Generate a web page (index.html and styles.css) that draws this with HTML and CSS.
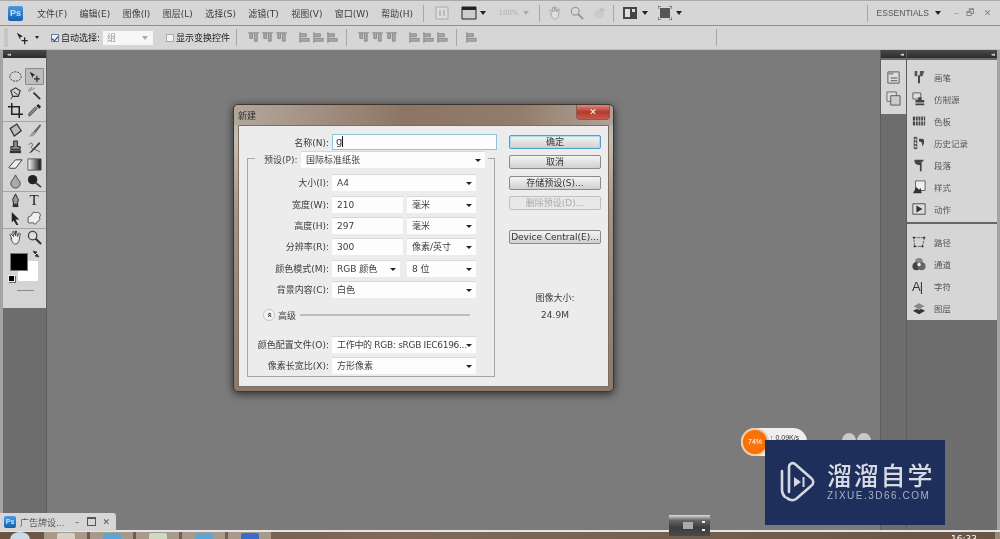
FILE: index.html
```html
<!DOCTYPE html>
<html lang="zh">
<head>
<meta charset="utf-8">
<title>新建</title>
<link rel="stylesheet" href="styles.css">
</head>
<body>
<svg class="defs" width="0" height="0">
  <symbol id="marquee" viewBox="0 0 16 16"><ellipse cx="8" cy="8" rx="6" ry="5" fill="none" stroke="#333" stroke-dasharray="2 1"/></symbol>
  <symbol id="move" viewBox="0 0 16 16"><path d="M2 2l7 4-3 1 0 3z" fill="#222"/><path d="M11 7v8M7.500 11h7" stroke="#222" stroke-width="1.400"/></symbol>
  <symbol id="lasso" viewBox="0 0 16 16"><path d="M3 5l5-3 5 3-2 6H5z" fill="none" stroke="#333" stroke-width="1.200"/><path d="M5 11l-2 3M6 6l5 4" stroke="#333"/></symbol>
  <symbol id="wand" viewBox="0 0 16 16"><path d="M7 7l7 7" stroke="#333" stroke-width="2"/><path d="M5 1v3M1 5h3M2 2l2 2M8 2L6 4" stroke="#777"/></symbol>
  <symbol id="crop" viewBox="0 0 16 16"><path d="M4 0v12h12M0 4h12v12" fill="none" stroke="#222" stroke-width="1.600"/></symbol>
  <symbol id="dropper" viewBox="0 0 16 16"><path d="M2 14l2-1 7-7-2-2-7 7z" fill="#888" stroke="#333" stroke-width=".7"/><path d="M10 3l2-2 3 3-2 2z" fill="#222"/></symbol>
  <symbol id="heal" viewBox="0 0 16 16"><path d="M8 1l6 6-6 7-6-7z" fill="#bbb" stroke="#333" stroke-width="1.300" transform="rotate(12 8 8)"/></symbol>
  <symbol id="brush" viewBox="0 0 16 16"><path d="M14 1L7 9l2 2 6-8z" fill="#666"/><path d="M7 9c-3 1-2 4-5 5 3 1 6 0 7-3z" fill="#999"/></symbol>
  <symbol id="stamp" viewBox="0 0 16 16"><path d="M6 1h4v6h3v3H3V7h3z" fill="#888" stroke="#222"/><path d="M2 11h12v3H2z" fill="#333"/></symbol>
  <symbol id="hist" viewBox="0 0 16 16"><path d="M13 2L4 12l-2 2 3-1L14 4z" fill="#333"/><path d="M2 5c3-4 5 0 3 2-2 3 6 3 9 6" fill="none" stroke="#555"/></symbol>
  <symbol id="eraser" viewBox="0 0 16 16"><path d="M1 11l7-8h7l-7 9H2z" fill="#eee" stroke="#333"/></symbol>
  <symbol id="grad" viewBox="0 0 16 16"><defs><linearGradient id="g1"><stop offset="0" stop-color="#fff"/><stop offset="1" stop-color="#111"/></linearGradient></defs><path d="M1 2h14v12H1z" fill="url(#g1)" stroke="#555"/></symbol>
  <symbol id="drop" viewBox="0 0 16 16"><path d="M8 1c2 5 5 6 5 9a5 5 0 0 1-10 0c0-3 3-4 5-9z" fill="#aaa" stroke="#444"/></symbol>
  <symbol id="dodge" viewBox="0 0 16 16"><circle cx="6" cy="6" r="5" fill="#222"/><path d="M9 9l6 5" stroke="#444" stroke-width="2"/></symbol>
  <symbol id="pen" viewBox="0 0 16 16"><path d="M8 1l3 6-1 5H6L5 7z" fill="#999" stroke="#222"/><path d="M5 12h6v3H5z" fill="#333"/></symbol>
  <symbol id="arrow" viewBox="0 0 16 16"><path d="M4 1l8 8-4 0 3 6-2 0-3-5-2 2z" fill="#222"/></symbol>
  <symbol id="shape" viewBox="0 0 16 16"><path d="M7 1c3 2 4-1 7 2 1 3-2 3 0 6-3 2-4 5-6 5-1-3-5 0-7-2 1-3-1-4 1-6 3 0 3-3 5-5z" fill="#eee" stroke="#444"/></symbol>
  <symbol id="hand" viewBox="0 0 16 16"><path d="M4 9L2 5l1-1 3 3-1-5 1-1 2 5V1l1 0 1 6 2-4 1 1-1 6c0 3-2 5-4 5s-3-1-5-6z" fill="#eee" stroke="#333" stroke-width=".9"/></symbol>
  <symbol id="zoomg" viewBox="0 0 16 16"><circle cx="6" cy="6" r="4.500" fill="#ddd" stroke="#444" stroke-width="1.400"/><path d="M9 9l6 6" stroke="#333" stroke-width="2.200"/></symbol>
  <symbol id="swap" viewBox="0 0 8 8"><path d="M1 1l4 1-2 2zM7 7L3 6l2-2zM2 2l4 4" fill="#333" stroke="#333" stroke-width=".7"/></symbol>
  <symbol id="alv" viewBox="0 0 14 14"><path d="M1 2h12M3 2v6h3V2M8 2v9h3V2" fill="#aaa" stroke="#888"/></symbol>
  <symbol id="alh" viewBox="0 0 14 14"><path d="M2 1v12M2 3h7v3H2M2 8h10v3H2" fill="#aaa" stroke="#888"/></symbol>
  <symbol id="bridge" viewBox="0 0 14 14"><path d="M1 1h12v12H1z" fill="#ddd" stroke="#aaa"/><path d="M4 4v6h2V4zM8 4v6h2V4z" fill="#bbb"/></symbol>
  <symbol id="docs" viewBox="0 0 16 14"><path d="M1 1h14v12H1z" fill="#ccc" stroke="#222"/><path d="M1 1h14v3H1z" fill="#222"/></symbol>
  <symbol id="layout" viewBox="0 0 14 14"><path d="M0 1h14v12H0z" fill="#444"/><path d="M2 3h5v8H2zM9 3h3v3H9z" fill="#ddd"/></symbol>
  <symbol id="screen" viewBox="0 0 14 14"><path d="M2 2h10v10H2z" fill="#555"/><path d="M0 3V0h3M11 0h3v3M14 11v3h-3M3 14H0v-3" fill="none" stroke="#444"/></symbol>
  <symbol id="rotate" viewBox="0 0 14 14"><circle cx="7" cy="8" r="5" fill="#bbb"/><path d="M8 1l5 3-4 3z" fill="#999"/></symbol>
  <symbol id="p-brush" viewBox="0 0 16 16"><path d="M3 1v6h3V1zM9 1v6h3l2-6z" fill="#555"/><path d="M7 6h2v9H7z" fill="#333"/></symbol>
  <symbol id="p-clone" viewBox="0 0 16 16"><path d="M1 1h9v7H1z" fill="#ddd" stroke="#555"/><path d="M7 6h4v3h3v3H4V9h3zM4 13h10v2H4z" fill="#444"/></symbol>
  <symbol id="p-swatch" viewBox="0 0 16 16"><path d="M1 3h14v10H1z" fill="#444"/><path d="M4 3v10M7 3v10M10 3v10M13 3v10M1 8h14" stroke="#ddd"/></symbol>
  <symbol id="p-hist" viewBox="0 0 16 16"><path d="M2 1h4v14H2z" fill="#555"/><path d="M3 3h2v2H3zM3 7h2v2H3zM3 11h2v2H3z" fill="#ddd"/><path d="M8 3h4c3 1 2 6 0 9l-1-5-3-1z" fill="#444"/></symbol>
  <symbol id="p-para" viewBox="0 0 16 16"><path d="M3 2h10v2h-2v11H9V8C5 8 2 6 3 2z" fill="#444"/></symbol>
  <symbol id="p-style" viewBox="0 0 16 16"><path d="M4 1h11v11H4z" fill="#eee" stroke="#555"/><path d="M1 15l4-7 3 3 2-2 1 6z" fill="#333"/></symbol>
  <symbol id="p-action" viewBox="0 0 16 16"><path d="M1 2h14v12H1z" fill="#ddd" stroke="#444"/><path d="M5 4l7 4-7 4z" fill="#333"/></symbol>
  <symbol id="p-path" viewBox="0 0 16 16"><path d="M2 3h12l-2 10H3z" fill="none" stroke="#555" stroke-dasharray="3 1"/><path d="M1 2h2v2H1zM13 2h2v2h-2zM2 12h2v2H2zM11 12h2v2h-2z" fill="#222"/></symbol>
  <symbol id="p-chan" viewBox="0 0 16 16"><circle cx="8" cy="5.500" r="4.500" fill="#888"/><circle cx="5" cy="10.500" r="4.500" fill="#444"/><circle cx="11" cy="10.500" r="4.500" fill="#666"/><circle cx="8" cy="8.500" r="2" fill="#eee"/></symbol>
  <symbol id="p-layer" viewBox="0 0 16 16"><path d="M8 8l7 3-7 4-7-4z" fill="#333"/><path d="M8 2l7 4-7 4-7-4z" fill="#888" stroke="#eee" stroke-width=".6"/></symbol>
  <symbol id="d-min" viewBox="0 0 16 16"><path d="M2 2h12v12H2z" fill="#ddd" stroke="#555"/><path d="M2 2h6v3H2z" fill="#999"/><path d="M5 8h7v1H5zM5 11h7v1H5z" fill="#555"/></symbol>
  <symbol id="d-copy" viewBox="0 0 16 16"><path d="M1 1h10v10H1z" fill="#ddd" stroke="#666"/><path d="M5 5h10v10H5z" fill="#ccc" stroke="#555"/></symbol>
</svg>

<div class="app">
  <header class="menubar">
    <div class="ps-logo">Ps</div>
    <nav class="menu">
      <span>文件(F)</span><span>编辑(E)</span><span>图像(I)</span><span>图层(L)</span><span>选择(S)</span><span>滤镜(T)</span><span>视图(V)</span><span>窗口(W)</span><span>帮助(H)</span>
    </nav>
    <i class="vsep sep-a"></i>
    <svg class="ic14 ml11"><use href="#bridge"/></svg>
    <svg class="ic16 ml12"><use href="#docs"/></svg><b class="tri ml3"></b>
    <span class="zoomval">100%</span><b class="tri tri-gray ml5"></b>
    <i class="vsep ml10"></i>
    <svg class="ic14 ml8 dim"><use href="#hand"/></svg>
    <svg class="ic14 ml8 dim"><use href="#zoomg"/></svg>
    <svg class="ic14 ml8 dim"><use href="#rotate"/></svg>
    <i class="vsep ml7"></i>
    <svg class="ic14 ml9"><use href="#layout"/></svg><b class="tri ml5"></b>
    <svg class="ic14 ml10"><use href="#screen"/></svg><b class="tri ml4"></b>
    <div class="menu-right">
      <i class="vsep"></i>
      <span class="essentials">ESSENTIALS</span><b class="tri ml6"></b>
      <span class="win-btn ml9">–</span><span class="win-btn">🗗</span><span class="win-btn wb-x">✕</span>
    </div>
  </header>

  <section class="options">
    <i class="grip"></i>
    <svg class="ic16 ml6"><use href="#move"/></svg><b class="tri tri-s ml5"></b>
    <i class="check ml12 checked"></i>
    <span class="opt-label">自动选择:</span>
    <div class="opt-select"><span>组</span><b class="tri tri-gray"></b></div>
    <i class="check ml13"></i>
    <span class="opt-label">显示变换控件</span>
    <i class="vsep ml6"></i>
    <div class="al-group ml10"><svg><use href="#alv"/></svg><svg><use href="#alv"/></svg><svg><use href="#alv"/></svg></div>
    <div class="al-group ml10"><svg><use href="#alh"/></svg><svg><use href="#alh"/></svg><svg><use href="#alh"/></svg></div>
    <i class="vsep ml7"></i>
    <div class="al-group ml10"><svg><use href="#alv"/></svg><svg><use href="#alv"/></svg><svg><use href="#alv"/></svg></div>
    <div class="al-group ml10"><svg><use href="#alh"/></svg><svg><use href="#alh"/></svg><svg><use href="#alh"/></svg></div>
    <i class="vsep ml7"></i>
    <div class="al-group ml8"><svg><use href="#alh"/></svg></div>
    <i class="vsep opt-end"></i>
  </section>

  <main class="work">
    <aside class="tools-col">
      <div class="tools">
        <div class="hdr"><span class="chev">◂◂</span></div>
        <div class="tool-grid tool-grid-first">
          <svg><use href="#marquee"/></svg><svg class="selected"><use href="#move"/></svg>
          <svg><use href="#lasso"/></svg><svg><use href="#wand"/></svg>
          <svg><use href="#crop"/></svg><svg><use href="#dropper"/></svg>
        </div>
        <hr class="tool-sep">
        <div class="tool-grid">
          <svg><use href="#heal"/></svg><svg><use href="#brush"/></svg>
          <svg><use href="#stamp"/></svg><svg><use href="#hist"/></svg>
          <svg><use href="#eraser"/></svg><svg><use href="#grad"/></svg>
          <svg><use href="#drop"/></svg><svg><use href="#dodge"/></svg>
        </div>
        <hr class="tool-sep">
        <div class="tool-grid">
          <svg><use href="#pen"/></svg><span class="t-tool">T</span>
          <svg><use href="#arrow"/></svg><svg><use href="#shape"/></svg>
        </div>
        <hr class="tool-sep">
        <div class="tool-grid">
          <svg><use href="#hand"/></svg><svg><use href="#zoomg"/></svg>
        </div>
        <div class="swatches">
          <i class="sw-bg"></i><i class="sw-fg"></i>
          <svg class="sw-swap"><use href="#swap"/></svg>
          <i class="sw-mini"></i>
        </div>
        <i class="quickmask"></i>
      </div>
    </aside>

    <div class="canvas"></div>

    <aside class="dock">
      <div class="dock-icons">
        <div class="hdr hdr-r"><span class="chev">◂◂</span></div>
        <div class="icon-well">
          <svg><use href="#d-min"/></svg>
          <svg><use href="#d-copy"/></svg>
        </div>
      </div>
      <div class="dock-panels">
        <div class="hdr hdr-r"><span class="chev">◂◂</span></div>
        <div class="pgroup">
          <div class="pitem"><svg><use href="#p-brush"/></svg><span>画笔</span></div>
          <div class="pitem"><svg><use href="#p-clone"/></svg><span>仿制源</span></div>
          <div class="pitem"><svg><use href="#p-swatch"/></svg><span>色板</span></div>
          <div class="pitem"><svg><use href="#p-hist"/></svg><span>历史记录</span></div>
          <div class="pitem"><svg><use href="#p-para"/></svg><span>段落</span></div>
          <div class="pitem"><svg><use href="#p-style"/></svg><span>样式</span></div>
          <div class="pitem"><svg><use href="#p-action"/></svg><span>动作</span></div>
        </div>
        <div class="pgroup pgroup-2">
          <div class="pitem"><svg><use href="#p-path"/></svg><span>路径</span></div>
          <div class="pitem"><svg><use href="#p-chan"/></svg><span>通道</span></div>
          <div class="pitem"><span class="p-a">A|</span><span>字符</span></div>
          <div class="pitem"><svg><use href="#p-layer"/></svg><span>图层</span></div>
        </div>
      </div>
    </aside>
  </main>

  <footer class="taskbar">
    <i class="orb"></i>
    <i class="task"><b class="tb-a"></b></i><i class="task"><b class="tb-b"></b></i><i class="task"><b class="tb-c"></b></i><i class="task"><b class="tb-d"></b></i><i class="task"><b class="tb-e"></b></i>
    <span class="clock">16:33</span>
    <i class="showdesk"></i>
  </footer>

  <div class="dialog">
    <div class="d-title"><span>新建</span><span class="d-close">✕</span></div>
    <div class="d-client">
      <div class="d-form">
        <div class="row row-name"><label>名称(N):</label><div class="field f-name">g<i class="caret"></i></div></div>
        <div class="group">
          <div class="legend"><label>预设(P):</label><div class="field f-preset sel">国际标准纸张</div></div>
          <div class="row"><label>大小(I):</label><div class="field f-full sel">A4</div></div>
          <div class="row"><label>宽度(W):</label><div class="field f-num">210</div><div class="field f-unit sel">毫米</div></div>
          <div class="row"><label>高度(H):</label><div class="field f-num">297</div><div class="field f-unit sel">毫米</div></div>
          <div class="row"><label>分辨率(R):</label><div class="field f-num">300</div><div class="field f-unit sel">像素/英寸</div></div>
          <div class="row"><label>颜色模式(M):</label><div class="field f-mode sel">RGB 颜色</div><div class="field f-unit f-unit-gap sel">8 位</div></div>
          <div class="row"><label>背景内容(C):</label><div class="field f-full sel">白色</div></div>
          <div class="adv"><i class="adv-btn">«</i><span>高级</span><i class="adv-line"></i></div>
          <div class="row"><label>颜色配置文件(O):</label><div class="field f-full f-tight sel">工作中的 RGB: sRGB IEC6196...</div></div>
          <div class="row"><label>像素长宽比(X):</label><div class="field f-full sel">方形像素</div></div>
        </div>
      </div>
      <div class="d-side">
        <button class="btn btn-ok">确定</button>
        <button class="btn">取消</button>
        <button class="btn">存储预设(S)...</button>
        <button class="btn btn-off">删除预设(D)...</button>
        <button class="btn btn-dc">Device Central(E)...</button>
        <div class="imgsize">图像大小:</div>
        <div class="imgval">24.9M</div>
      </div>
    </div>
  </div>

  <div class="mini-win">
    <div class="ps-logo ps-small">Ps</div>
    <span class="mini-name">广告牌设...</span>
    <span class="mini-btn">–</span><span class="mini-btn mini-box"></span><span class="mini-btn">✕</span>
  </div>

  <div class="speed"><i class="speed-orb">74%</i><span class="speed-text"><b>↑</b> 0.09K/s</span></div>
  <i class="bump bump-a"></i><i class="bump bump-b"></i>

  <div class="thumb"><i class="thumb-mid"></i><i class="thumb-dots"></i></div>

  <div class="watermark">
    <svg class="wm-logo" viewBox="0 0 36 44">
      <path d="M10 32V7c0-3 3-5 6-3l16 14c3 2 3 6 0 8L17 39c-3 2-7 1-9-1" fill="none" stroke="#d5d8e0" stroke-width="2.600" stroke-linecap="round" stroke-linejoin="round"/>
      <path d="M3 11v19c0 3 1 5 3 7" fill="none" stroke="#d5d8e0" stroke-width="2.600" stroke-linecap="round"/>
      <path d="M15 17l7 5-7 5z" fill="#d5d8e0"/><path d="M24.500 17v10" stroke="#d5d8e0" stroke-width="2"/>
    </svg>
    <div class="wm-text">
      <div class="wm-cn">溜溜自学</div>
      <div class="wm-en">ZIXUE.3D66.COM</div>
    </div>
  </div>
</div>
</body>
</html>
```
FILE: styles.css
```css
* { box-sizing: border-box; }
html, body { margin: 0; padding: 0; }
body { width: 1000px; height: 539px; overflow: hidden; background: #777; }
.defs { position: absolute; }
.app {
  position: relative; width: 1000px; height: 539px; overflow: hidden;
  display: flex; flex-direction: column;
  font: 9px "DejaVu Sans", "Noto Sans CJK SC", sans-serif; color: #3c3c3c;
  filter: blur(.35px);
}
svg { display: block; }
.ic14 { width: 14px; height: 14px; flex: none; }
.ic16 { width: 16px; height: 14px; flex: none; }
.dim { opacity: .4; }
.ml3 { margin-left: 3px; } .ml4 { margin-left: 4px; }
.ml5 { margin-left: 5px; } .ml6 { margin-left: 6px; } .ml7 { margin-left: 7px; } .ml8 { margin-left: 8px; }
.ml9 { margin-left: 9px; } .ml10 { margin-left: 10px; } .ml11 { margin-left: 11px; } .ml12 { margin-left: 12px; }
.ml13 { margin-left: 13px; }

/* top bars */
.menubar {
  height: 25px; flex: none; display: flex; align-items: center;
  background: #d6d6d6; border-top: 1px solid #aaa; padding: 0 0 0 8px;
}
.ps-logo {
  width: 15px; height: 15px; flex: none; border-radius: 2px;
  background: linear-gradient(#4a9be0, #1560b0); color: #bfe3ff;
  font: bold 9px/15px "Liberation Sans", sans-serif; text-align: center;
}
.menu { display: flex; gap: 12.400px; margin-left: 14px; }
.menu span { white-space: nowrap; }
.vsep { display: block; width: 1px; height: 17px; background: #a8a8a8; flex: none; }
.sep-a { margin-left: 10.500px; }
.tri { display: block; flex: none; width: 0; height: 0; border: 3px solid transparent; border-top: 4px solid #222; border-bottom: 0; }
.tri-gray { border-top-color: #aaa; }
.tri-s { border-width: 3px 2.500px 0; }
.zoomval { margin-left: 12px; color: #b0b0b0; font-size: 7px; }
.menu-right { margin-left: auto; display: flex; align-items: center; padding-right: 6px; }
.essentials { margin-left: 9px; font: 8.500px "Liberation Sans", sans-serif; color: #555; white-space: nowrap; }
.win-btn { width: 13px; text-align: center; color: #888; font-size: 9px; line-height: 12px; }
.wb-x { margin-left: 5px; }

.options {
  height: 25px; flex: none; display: flex; align-items: center;
  background: #d6d6d6; border-top: 1px solid #8f8f8f; border-bottom: 1px solid #c0c0c0; padding-left: 4px;
}
.grip { width: 4px; height: 19px; background: #c6c6c6; flex: none; }
.check { display: block; width: 8px; height: 8px; flex: none; background: #f2f2f2; border: 1px solid #aaa; position: relative; }
.checked { background: #e8eef8; border-color: #6b7fa8; }
.checked::after { content: ""; position: absolute; left: 1px; top: 0; width: 3px; height: 5px; border: solid #334; border-width: 0 1px 1px 0; transform: rotate(40deg); }
.opt-label { margin-left: 2px; color: #222; white-space: nowrap; }
.opt-select {
  width: 50px; height: 14px; margin-left: 3px; background: #f6f6f6; flex: none;
  display: flex; align-items: center; justify-content: space-between; padding: 0 5px 0 4px; color: #999;
}
.al-group { display: flex; gap: 1px; flex: none; }
.al-group svg { width: 13px; height: 13px; }
.opt-end { margin-left: 238px; }

/* work area */
.work { flex: 1; min-height: 0; display: flex; }
.tools-col { width: 47px; flex: none; background: #6d6d6d; border-left: 3px solid #a4a4a4; border-right: 1px solid #5f5f5f; }
.tools { background: #d4d4d4; height: 258px; position: relative; }
.hdr { height: 8px; background: linear-gradient(#4a4a4a, #2c2c2c); color: #ccc; font-size: 5px; line-height: 8px; padding-left: 4px; }
.hdr-r { text-align: right; padding: 0 3px 0 0; }
.chev { letter-spacing: -1px; }
.tool-grid { display: grid; grid-template-columns: 19px 19px; grid-auto-rows: 17.200px; justify-content: center; justify-items: center; align-items: center; }
.tool-grid-first { padding-top: 10px; }
.tool-grid svg { width: 15px; height: 15px; }
.tool-grid .selected { width: 19px; height: 17px; padding: 1px 2px; border: 1px solid #8a8a8a; background: #bdbdbd; border-radius: 1px; }
.t-tool { font: 15px/15px "Liberation Serif", serif; color: #222; }
.tool-sep { margin: 1px 0 0; border: 0; border-top: 1px solid #a5a5a5; }
.swatches { position: relative; height: 34px; margin-top: 7.400px; }
.sw-bg { position: absolute; left: 15px; top: 8px; width: 20px; height: 20px; background: #fff; }
.sw-fg { position: absolute; left: 7px; top: 0; width: 18px; height: 18px; background: #000; border: 1px solid #777; }
.sw-swap { position: absolute; left: 29px; top: -3px; width: 8px; height: 8px; }
.sw-mini { position: absolute; left: 5px; top: 22px; width: 7px; height: 7px; background: #000; border: 1px solid #eee; box-shadow: 1px 1px 0 #666; }
.quickmask { display: block; width: 17px; height: 1px; margin: 3px 0 0 14px; background: #888; }

.canvas { flex: 1; background: #7b7b7b; }
.dock { width: 120px; flex: none; background: #6d6d6d; display: flex; border-left: 1px solid #5d5d5d; border-right: 3px solid #a4a4a4; }
.dock-icons { width: 25px; flex: none; }
.icon-well { background: #d6d6d6; height: 54px; margin-top: 2px; display: flex; flex-direction: column; gap: 6px; padding: 10px 0 0 5px; }
.icon-well svg { width: 15px; height: 15px; }
.dock-panels { flex: 1; border-left: 1px solid #5d5d5d; }
.pgroup { background: #d6d6d6; margin-top: 2px; height: 164px; padding-top: 6px; border-bottom: 2px solid #666; }
.pgroup-2 { margin-top: 0; height: 96px; border-bottom: 0; padding-top: 7px; }
.pitem { height: 22px; display: flex; align-items: center; gap: 8px; padding-left: 5px; color: #555; font-size: 8.500px; }
.pitem svg { width: 14px; height: 14px; flex: none; }
.p-a { width: 14px; flex: none; font: 13px "Liberation Sans", sans-serif; color: #333; white-space: nowrap; letter-spacing: -1px; }

/* taskbar */
.taskbar {
  height: 9px; flex: none; display: flex; align-items: flex-start; gap: 3px; overflow: hidden; padding-left: 10px; position: relative;
  background: linear-gradient(90deg, #6a5444, #80695a 40%, #735f50 70%, #6a5444);
  border-top: 2px solid #e6e6e6;
}
.orb { width: 20px; height: 14px; border-radius: 50%; margin-right: 11px; flex: none; background: #c9dbe6; }
.task { display: block; width: 43px; height: 7px; background: #a89a8a; flex: none; text-align: center; }
.task b { display: block; margin: 1px auto 0; width: 18px; height: 6px; border-radius: 2px 2px 0 0; }
.tb-a { background: #d5d0c8; } .tb-b { background: #5ba6d8; } .tb-c { background: #cfd8c0; } .tb-d { background: #5ba6d8; } .tb-e { background: #3a6cc8; }
.clock { position: absolute; left: 951px; top: 2px; color: #fff; font-size: 9px; line-height: 10px; }
.showdesk { position: absolute; right: 0; top: 0; width: 5px; height: 9px; background: #9a8a7c; }

/* dialog */
.dialog {
  position: absolute; left: 233px; top: 104px; width: 381px; height: 288px;
  display: flex; flex-direction: column; border-radius: 5px; padding: 0 4px 4px;
  border: 1px solid #3e3530;
  background: linear-gradient(#b0a69c, #c5bcb4 12%, #a89383 38%, #8d7767 100%);
  box-shadow: 0 2px 8px rgba(0,0,0,.65);
}
.d-title {
  height: 20px; flex: none; display: flex; align-items: center; justify-content: space-between;
  margin: 0 -4px; padding: 0 3px 0 4px; color: #2c2c2c;
  background: linear-gradient(90deg, #b3a79c, #a8988a 15%, #8d7565 45%, #927c6b 75%, #b0a498);
  border-radius: 5px 5px 0 0;
}
.d-close {
  width: 34px; height: 15px; align-self: flex-start; text-align: center; color: #fff; line-height: 14px; font-size: 9px;
  background: linear-gradient(#d98a80, #b53a2c 50%, #c65a4c); border-radius: 0 0 4px 4px; border: 1px solid #8a5a52; border-top: 0;
}
.d-client { flex: 1; min-height: 0; display: flex; background: #ececec; border: 1px solid #7c6e62; }
.d-form { width: 261px; flex: none; padding-top: 8px; }
.row { display: flex; height: 21.400px; align-items: center; }
.row label { width: 81px; text-align: right; margin-right: 3px; white-space: nowrap; flex: none; }
.row-name label { width: 90px; }
.row-name { height: 16px; }
.field {
  height: 17px; line-height: 16px; background: #fdfdfd; padding-left: 5px; flex: none; position: relative;
  border-top: 1px solid #d8d8d8; white-space: nowrap; overflow: hidden;
}
.sel::after {
  content: ""; position: absolute; right: 4px; top: 7px; width: 0; height: 0;
  border: 3px solid transparent; border-top: 3.500px solid #222; border-bottom: 0;
}
.f-name { width: 165px; height: 16px; border: 1px solid #8fc4de; padding-left: 3px; line-height: 14px; font-size: 10px; }
.caret { display: inline-block; width: 1px; height: 11px; background: #222; vertical-align: -2px; }
.group { margin: 8px 0 0 8px; width: 248px; height: 219px; border: 1px solid #a6a6a6; }
.legend { display: flex; align-items: center; width: 233px; height: 17px; margin: -8px 0 4px 7px; background: #ececec; padding-left: 2px; }
.legend label { width: 35px; text-align: left; padding-left: 7px; white-space: nowrap; flex: none; margin-right: 9px; }
.f-preset { width: 184px; }
.f-full { width: 144px; }
.f-tight { letter-spacing: -.3px; }
.f-num { width: 71px; }
.f-unit { width: 69px; margin-left: 4px; }
.f-mode { width: 68px; }
.f-unit-gap { margin-left: 7px; }
.adv { display: flex; align-items: center; height: 20px; margin: 5px 0 8px 15px; gap: 3px; }
.adv-btn {
  width: 12px; height: 12px; border-radius: 50%; background: #f6f6f6; border: 1px solid #c2c2c2; flex: none;
  font: bold 9px/9px "DejaVu Sans", sans-serif; text-align: center; transform: rotate(90deg);
}
.adv-line { width: 170px; height: 2px; background: #bdbdbd; margin-left: 1px; }
.d-side { width: 92px; margin-left: 9px; padding-top: 9px; display: flex; flex-direction: column; flex: none; }
.btn {
  display: block; width: 92px; height: 14px; margin: 0 0 6.300px; padding: 0;
  font: 9px/12px "DejaVu Sans", "Noto Sans CJK SC", sans-serif; color: #333; white-space: nowrap;
  background: linear-gradient(#f4f4f4, #d0d0d0); border: 1px solid #8b8b8b; border-radius: 2px;
}
.btn-ok { border-color: #4fa0c6; box-shadow: inset 0 0 0 1px #a9dcf0; }
.btn-off { color: #aaa; border-color: #c0c0c0; background: #e8e8e8; }
.btn-dc { margin-top: 14px; }
.imgsize { margin-top: 41px; text-align: center; }
.imgval { margin-top: 6px; text-align: center; }

/* floating */
.mini-win {
  position: absolute; left: 0; top: 513px; width: 116px; height: 18px; background: #d6d6d6; border-radius: 0 3px 0 0;
  display: flex; align-items: center; padding-left: 4px; color: #555;
}
.ps-small { width: 12px; height: 12px; font-size: 7px; line-height: 12px; }
.mini-name { margin-left: 4px; width: 50px; white-space: nowrap; }
.mini-btn { width: 14.500px; text-align: center; font-size: 9px; }
.mini-box::before { content: ""; display: inline-block; width: 7px; height: 6px; border: 1px solid #555; border-top-width: 2px; }
.speed {
  position: absolute; left: 741px; top: 428px; width: 66px; height: 28px; display: flex; align-items: flex-start;
  background: #efefef; border-radius: 14px;
}
.speed-orb {
  width: 28px; height: 28px; border-radius: 50%; flex: none; border: 2px solid #f3c9a0; text-align: center;
  font: 7px/24px "Liberation Sans", sans-serif; color: #fff; background: radial-gradient(#ff7a10, #f06a00);
}
.speed-text { margin: 4px 0 0 1px; font: 7px/12px "Liberation Sans", sans-serif; color: #333; white-space: nowrap; }
.speed-text b { color: #c22; }
.bump { position: absolute; top: 433px; width: 14px; height: 16px; border-radius: 50%; background: #c9c9c9; }
.bump-a { left: 842px; } .bump-b { left: 857px; }
.thumb {
  position: absolute; left: 669px; top: 515px; width: 41px; height: 21px;
  background: linear-gradient(#ddd, #666 25%, #3c3c3c 60%, #4a4a4a);
}
.thumb-mid { position: absolute; left: 14px; top: 7px; width: 10px; height: 7px; background: #aaa; }
.thumb-dots { position: absolute; left: 33px; top: 6px; width: 3px; height: 2px; background: #eee; box-shadow: 0 8px 0 #eee; }
.watermark {
  position: absolute; left: 765px; top: 440px; width: 180px; height: 85px; background: #1f2f5b;
  display: flex; padding: 21px 0 0 14px;
}
.wm-logo { width: 36px; height: 44px; flex: none; margin-top: -1px; }
.wm-text { margin-left: 12px; }
.wm-cn { font: 500 25px/26px "Noto Sans CJK SC", sans-serif; color: #d9dbe2; letter-spacing: 1.800px; white-space: nowrap; }
.wm-en { margin-top: 3px; font: 10px/12px "Liberation Sans", sans-serif; color: #aab0c4; letter-spacing: 1.500px; white-space: nowrap; }
```
